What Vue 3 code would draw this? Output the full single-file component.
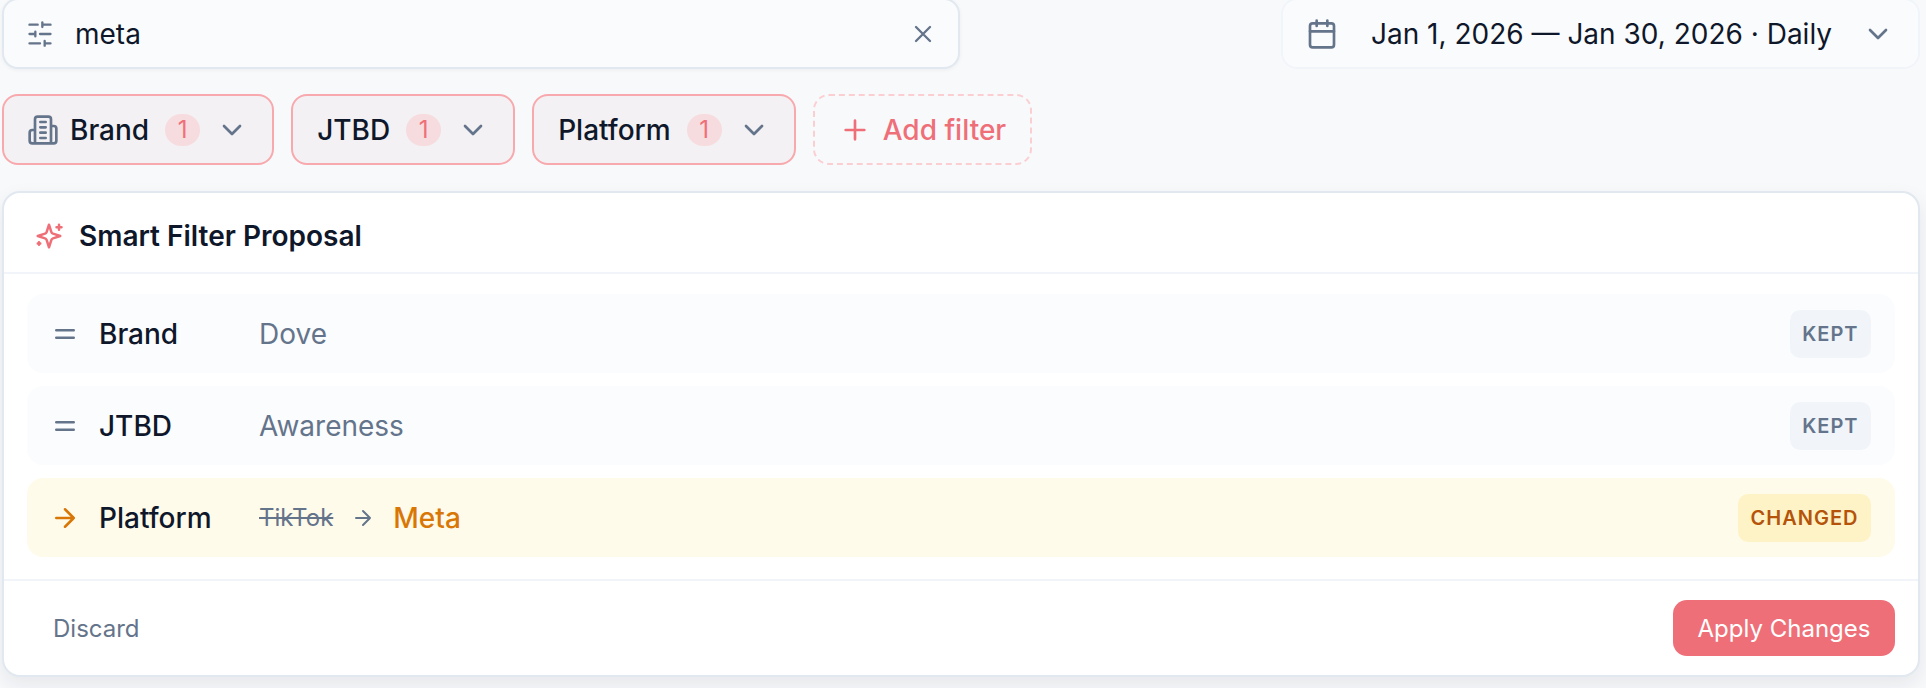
<script setup>
const rows = [
  { name: 'Brand', value: 'Dove', tag: 'KEPT' },
  { name: 'JTBD', value: 'Awareness', tag: 'KEPT' },
]
const chips = [
  { name: 'Brand', icon: true },
  { name: 'JTBD', icon: false },
  { name: 'Platform', icon: false },
]
</script>

<template>
  <div class="page">
    <div class="top">
      <div class="search">
        <svg class="ico i28" viewBox="0 0 24 24"><path d="M21 4h-7M10 4H3M21 12h-9M8 12H3M21 20h-5M12 20H3M14 2v4M8 10v4M16 18v4" /></svg>
        <span class="search-text">meta</span>
        <svg class="ico i28" viewBox="0 0 24 24"><path d="M18 6 6 18M6 6l12 12" /></svg>
      </div>
      <div class="date">
        <svg class="ico i32" viewBox="0 0 24 24"><path d="M8 2v4M16 2v4M3 10h18" /><rect x="3" y="4" width="18" height="18" rx="2" /></svg>
        <span class="date-text">Jan 1, 2026 — Jan 30, 2026 · Daily</span>
        <svg class="ico i32" viewBox="0 0 24 24"><path d="m6 9 6 6 6-6" /></svg>
      </div>
    </div>

    <div class="chips">
      <div v-for="c in chips" :key="c.name" class="chip">
        <svg v-if="c.icon" class="ico i32 chip-ico" viewBox="0 0 24 24"><path d="M6 22V4a2 2 0 0 1 2-2h8a2 2 0 0 1 2 2v18ZM6 12H4a2 2 0 0 0-2 2v6a2 2 0 0 0 2 2h2M18 9h2a2 2 0 0 1 2 2v9a2 2 0 0 1-2 2h-2M10 6h4M10 10h4M10 14h4M10 18h4" /></svg>
        <span class="chip-name">{{ c.name }}</span>
        <span class="count">1</span>
        <svg class="ico i32 chip-chev" viewBox="0 0 24 24"><path d="m6 9 6 6 6-6" /></svg>
      </div>
      <div class="add">
        <svg class="ico i32 add-ico" viewBox="0 0 24 24"><path d="M5 12h14M12 5v14" /></svg>
        <span>Add filter</span>
      </div>
    </div>

    <section class="card">
      <header class="head">
        <svg class="ico i30 spark" viewBox="0 0 24 24"><path d="m12 3-1.912 5.813a2 2 0 0 1-1.275 1.275L3 12l5.813 1.912a2 2 0 0 1 1.275 1.275L12 21l1.912-5.813a2 2 0 0 1 1.275-1.275L21 12l-5.813-1.912a2 2 0 0 1-1.275-1.275L12 3ZM20 3v4M22 5h-4M4 17v2M5 18H3" /></svg>
        <span class="title">Smart Filter Proposal</span>
      </header>
      <div class="list">
        <div v-for="r in rows" :key="r.name" class="row">
          <svg class="ico i30 row-ico" viewBox="0 0 24 24"><path d="M5 9h14M5 15h14" /></svg>
          <span class="row-name">{{ r.name }}</span>
          <span class="row-val">{{ r.value }}</span>
          <span class="tag">{{ r.tag }}</span>
        </div>
        <div class="row changed">
          <svg class="ico i30 row-ico" viewBox="0 0 24 24"><path d="M5 12h14M12 5l7 7-7 7" /></svg>
          <span class="row-name">Platform</span>
          <span class="row-val old"><s>TikTok</s></span>
          <svg class="ico i24 mid" viewBox="0 0 24 24"><path d="M5 12h14M12 5l7 7-7 7" /></svg>
          <span class="new-val">Meta</span>
          <span class="tag">CHANGED</span>
        </div>
      </div>
      <footer class="foot">
        <button class="discard">Discard</button>
        <button class="apply">Apply Changes</button>
      </footer>
    </section>
  </div>
</template>

<style>
html, body { margin: 0; background: #f8f9fb; }
</style>

<style scoped>
.page {
  width: 1926px;
  height: 688px;
  box-sizing: border-box;
  padding: 0 6px 0 2px;
  overflow: hidden;
  font-family: Inter, "Liberation Sans", sans-serif;
  color: #0f172a;
}
.ico { fill: none; stroke: currentColor; stroke-width: 2; stroke-linecap: round; stroke-linejoin: round; flex: none; color: #64748b; display: block; }
.i24 { width: 24px; height: 24px; }
.i28 { width: 28px; height: 28px; }
.i30 { width: 30px; height: 30px; }
.i32 { width: 32px; height: 32px; }
.top { display: flex; justify-content: space-between; align-items: flex-start; margin-top: -2px; }
.search {
  width: 958px; height: 71px; box-sizing: border-box;
  display: flex; align-items: center;
  padding: 0 21px 0 22px;
  background: #fafbfd;
  border: 2px solid #e2e8f0;
  border-radius: 16px;
  box-shadow: 0 1px 4px rgba(15, 23, 42, .05);
}
.search-text { margin-left: 21px; font-size: 28px; flex: 1; }
.date {
  width: 639px; height: 71px; box-sizing: border-box;
  display: flex; align-items: center;
  padding: 0 24px 0 23px;
  background: #fafbfd;
  border: 2px solid #f1f5f9;
  border-radius: 16px;
}
.date-text { margin-left: 33px; font-size: 28px; flex: 1; white-space: nowrap; }
.chips { display: flex; gap: 17px; margin-top: 25px; }
.chip {
  height: 71px; box-sizing: border-box;
  display: flex; align-items: center;
  background: #f3f1f3;
  border: 2px solid #f8a9ae;
  border-radius: 16px;
  padding: 0 24px 0 24px;
  font-size: 28px;
}
.chip-name { font-weight: 500; }
.chip-ico { margin-left: -1px; margin-right: 11px; }
.count {
  margin-left: 16px;
  min-width: 35px; height: 32px;
  display: flex; align-items: center; justify-content: center;
  border-radius: 16px;
  background: #f7dcdf;
  color: #ef6f78;
  font-size: 24px;
}
.chip-chev { margin-left: 16px; }
.add {
  height: 71px; box-sizing: border-box;
  display: flex; align-items: center; gap: 12px;
  padding: 0 24px;
  border: 2px dashed #fbcfd2;
  border-radius: 16px;
  color: #ef6f78;
  font-size: 28px;
  font-weight: 500;
}
.add-ico { color: #ef6f78; }
.card {
  margin-top: 26px;
  height: 486px; box-sizing: border-box;
  background: #fff;
  border: 2px solid #e2e8f0;
  border-radius: 18px;
  box-shadow: 0 8px 20px rgba(15, 23, 42, .08);
  display: flex; flex-direction: column;
}
.head {
  height: 81px; box-sizing: border-box;
  display: flex; align-items: center; gap: 15px;
  padding: 6px 0 0 30px;
  border-bottom: 2px solid #f1f5f9;
}
.spark { color: #ef6f78; }
.title { font-size: 28px; font-weight: 600; }
.list { flex: 1; padding: 20px 23px 0 23px; display: flex; flex-direction: column; gap: 13px; }
.row {
  height: 79px; box-sizing: border-box;
  display: flex; align-items: center;
  padding: 0 24px 0 23px;
  background: #fbfcfe;
  border-radius: 16px;
}
.row-name { margin-left: 19px; width: 160px; font-size: 28px; font-weight: 500; }
.row-val { font-size: 28px; color: #64748b; }
.row-val.old { font-size: 24px; }
.row-val s { text-decoration: line-through; }
.tag {
  margin-left: auto;
  height: 48px; box-sizing: border-box;
  display: flex; align-items: center;
  padding: 0 12.5px;
  border-radius: 10px;
  background: #f1f5f9;
  color: #64748b;
  font-size: 20px; font-weight: 600; letter-spacing: 1px;
}
.changed { background: #fffbeb; }
.changed .row-ico { color: #d97706; }
.mid { margin: 0 18px 0 18px; }
.new-val { font-size: 28px; font-weight: 500; color: #d97706; }
.changed .tag { background: #fef3c7; color: #b45309; }
.foot {
  height: 96px; box-sizing: border-box;
  display: flex; align-items: center; justify-content: space-between;
  padding: 0 23px 0 23px;
  border-top: 2px solid #f1f5f9;
}
button { font-family: inherit; border: 0; background: none; cursor: pointer; }
.discard { color: #64748b; font-size: 24px; font-weight: 400; padding: 0 26px; height: 56px; }
.apply {
  width: 222px; height: 56px;
  background: #ef6f78; color: #fff;
  border-radius: 14px;
  font-size: 24px; font-weight: 400;
}
</style>
